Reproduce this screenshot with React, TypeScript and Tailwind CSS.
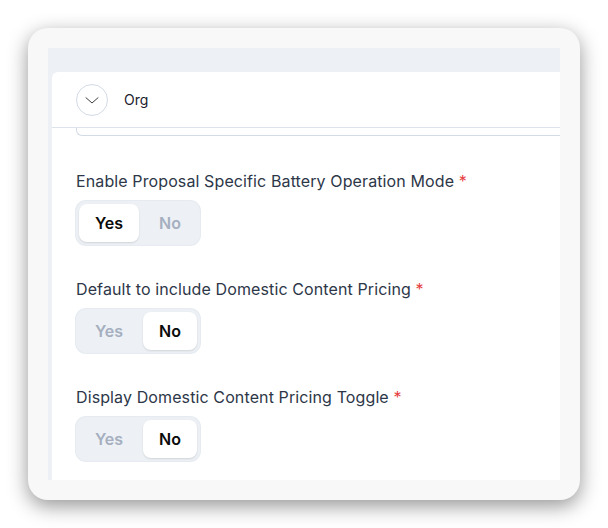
import React, { useState } from "react";

const font = { fontFamily: "Inter, 'Noto Sans', sans-serif" };

interface ToggleProps {
  value: boolean;
  onChange: (v: boolean) => void;
}

const YesNo: React.FC<ToggleProps> = ({ value, onChange }) => {
  const on = "bg-white text-[#0b0b0b] shadow-[0_1px_2px_rgba(0,0,0,0.12)]";
  const off = "text-[#a5afc0]";
  return (
    <div className="inline-flex gap-1 rounded-[10px] bg-[#edf1f5] p-[3px] ring-1 ring-[#e6ebf1]">
      <button
        className={`h-[38px] rounded-lg px-4 text-base font-semibold ${value ? on : off}`}
        onClick={() => onChange(true)}
      >
        Yes
      </button>
      <button
        className={`h-[38px] rounded-lg px-4 text-base font-semibold ${!value ? on : off}`}
        onClick={() => onChange(false)}
      >
        No
      </button>
    </div>
  );
};

const Field: React.FC<{ label: string; initial: boolean }> = ({ label, initial }) => {
  const [val, setVal] = useState(initial);
  return (
    <div className="flex flex-col items-start">
      <div className="mb-2 text-base leading-6 tracking-[0.007em] text-[#2d3748]">
        {label} <span className="text-[#e53e3e]">*</span>
      </div>
      <YesNo value={val} onChange={setVal} />
    </div>
  );
};

export default function App() {
  return (
    <div className="h-[528px] w-[608px] bg-white pl-[28px] pt-[28px]" style={font}>
      <div className="h-[472px] w-[552px] rounded-[20px] bg-[#f8f8f8] p-5 shadow-[0_6px_20px_rgba(0,0,0,0.42)]">
        <div className="flex h-full flex-col overflow-hidden bg-[#edf1f5] pl-1 pt-6">
          <div className="flex-1 rounded-tl-md bg-white">
            {/* header */}
            <div className="flex h-14 items-center gap-4 border-b border-[#dde3ec] pl-6">
              <div className="flex h-8 w-8 items-center justify-center rounded-full border border-[#d3dae5]">
                <svg width="18" height="18" viewBox="0 0 24 24" fill="none" stroke="#3a3a3a" strokeWidth="1.3" strokeLinecap="round" strokeLinejoin="round">
                  <path d="M4 9l8 7 8-7" />
                </svg>
              </div>
              <span className="text-sm text-[#1a202c]">Org</span>
            </div>
            <div className="ml-6 h-2 rounded-bl-md border-b border-l border-[#d3dbe6]" />

            <div className="flex flex-col gap-8 pl-6 pt-[33px]">
              <Field label="Enable Proposal Specific Battery Operation Mode" initial={true} />
              <Field label="Default to include Domestic Content Pricing" initial={false} />
              <Field label="Display Domestic Content Pricing Toggle" initial={false} />
            </div>
          </div>
        </div>
      </div>
    </div>
  );
}
